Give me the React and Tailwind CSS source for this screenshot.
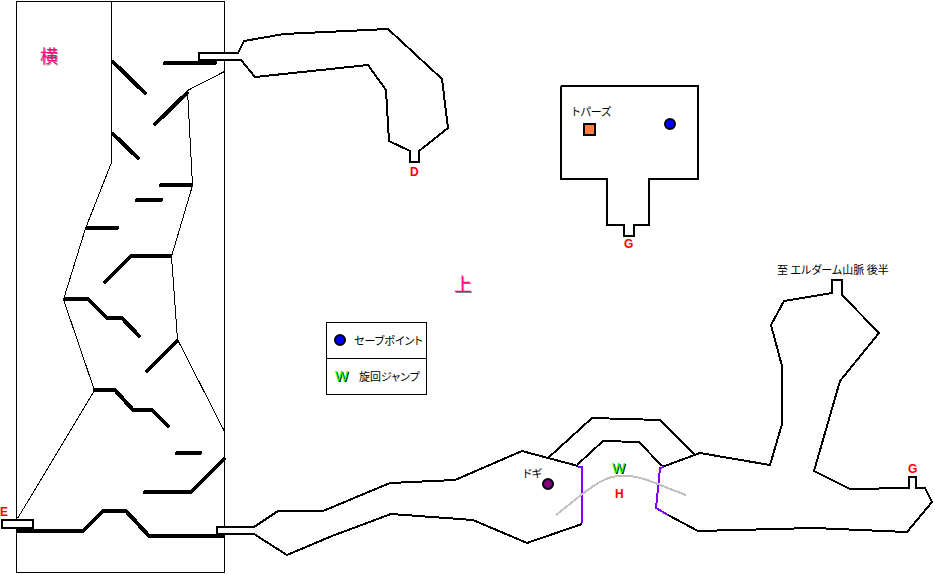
const jp = "font-['Noto_Sans_CJK_JP',sans-serif] [font-feature-settings:'palt']";

const ledges = [
  "165,63 215,63",
  "113,62 145,93",
  "187,93 155,124",
  "113,134 138,158",
  "161,185 191,185",
  "137,200 161,200",
  "88,228 117,228",
  "170,256 131,256 105,282",
  "65,299 88,299 107,318 122,318 139,336",
  "177,341 147,371",
  "95,390 115,390 133,410 152,410 168,426",
  "177,453 200,453",
  "145,492 191,492 224,459",
  "18,531 83,531 103,511 126,511 149,536 223,536",
];

const shaftWalls = [
  "111.5,1.5 111.5,162.5 85.5,228.5 63.5,299.5 94.5,390.5 17.5,518.5",
  "224.5,71.5 187.5,90.5 192.5,185.5 171.5,256.5 177.5,339.5 224.5,431.5",
];

const caveWalls = [
  "410,150 410,162 419,162 419,151 448,128 442,79 388,29 284,34 244,41 238,53 199,53 199,60 241,60 255,77 368,65 386,90 389,141 410,151",
  "561,86 698,86 698,179 649,179 649,225 634,225 634,236 624,236 624,225 607,225 607,179 561,179 561,86",
  "578,466 522,451 455,480 390,483 323,511 278,511 254,527 217,527 217,534 254,534 287,555 332,536 391,514 473,520 527,543 582,524",
  "548,458 592,418 660,420 696,456",
  "577,465 603,441 639,442 662,466",
  "662,467 700,453 770,465 782,424 782,366 771,325 784,301 832,293 832,280 842,280 842,295 879,333 840,381 814,471 850,489 909,488 909,477 916,477 916,488 925,488 932,502 907,532 814,528 698,531 668,515",
];

const exits = [
  { name: "D", x: 410, y: 176 },
  { name: "G", x: 624, y: 248 },
  { name: "G", x: 908, y: 473 },
  { name: "H", x: 615, y: 498 },
  { name: "E", x: 0, y: 516 },
];

const places = [
  { name: "トパーズ", x: 572, y: 116 },
  { name: "ドギ", x: 523, y: 478 },
  { name: "至 エルダーム山脈 後半", x: 777, y: 274 },
];

function ViewMark({ x, y, children }) {
  return (
    <g className={`${jp} text-[18px]`}>
      <text x={x + 1} y={y + 1} className="fill-[#808080] font-light" aria-hidden="true">{children}</text>
      <text x={x} y={y} className="fill-[#ff0080]">{children}</text>
    </g>
  );
}

function Legend() {
  return (
    <dl className={`${jp} m-0 grid h-full grid-rows-2 divide-y divide-black border border-black bg-white text-[11px] leading-4 text-black`}>
      <div className="flex items-center gap-2 pl-[7px]">
        <dt className="size-3 shrink-0 rounded-full border-2 border-black bg-[#0000ff]" />
        <dd className="whitespace-nowrap">セーブポイント</dd>
      </div>
      <div className="flex items-center gap-3 pl-2">
        <dt className="w-3 shrink-0 font-['Liberation_Sans',sans-serif] text-[14px] text-[#00ff00] [text-shadow:1px_1px_0_#000]">W</dt>
        <dd className="whitespace-nowrap">旋回ジャンプ</dd>
      </div>
    </dl>
  );
}

export default function App() {
  return (
    <main className="w-full bg-white">
      <svg viewBox="0 0 935 575" className="block h-auto w-full" role="img" aria-label="エルダーム山脈">
        <g fill="none" stroke="#000" shapeRendering="crispEdges">
          <g strokeWidth="1">
            <rect x="16.5" y="1.5" width="208" height="571" />
            {shaftWalls.map((p) => <polyline key={p} points={p} />)}
          </g>
          <g strokeWidth="4" strokeLinecap="round" strokeLinejoin="round">
            {ledges.map((p) => <polyline key={p} points={p} />)}
          </g>
          <g fill="#fff" strokeWidth="2">
            <rect x="2" y="520" width="31" height="8" />
            <rect x="199" y="53" width="39" height="7" stroke="none" />
            <rect x="217" y="527" width="37" height="7" stroke="none" />
          </g>
          <g strokeWidth="2">
            {caveWalls.map((p) => <polyline key={p} points={p} />)}
          </g>
          <g stroke="#8000ff" strokeWidth="2">
            <polyline points="578,467 582,467 582,523" />
            <polyline points="664,467 660,468 656,508 668,515" />
          </g>
          <path d="M556 515 L581 495 C598 482 608 476 621 476 C642 475 653 483 686 495" stroke="#c0c0c0" strokeWidth="2" />
          <rect x="584" y="124" width="11" height="11" fill="#ff8040" strokeWidth="2" />
        </g>
        <g stroke="#000" strokeWidth="2">
          <circle cx="670" cy="124" r="5" fill="#0000ff" />
          <circle cx="548" cy="484" r="5" fill="#800080" />
        </g>

        <ViewMark x={40} y={63}>横</ViewMark>
        <ViewMark x={454} y={291}>上</ViewMark>

        <g className={`${jp} fill-black text-[11px]`}>
          {places.map((p) => <text key={p.name} x={p.x} y={p.y}>{p.name}</text>)}
        </g>
        <g className="fill-[#ff0000] font-['Liberation_Sans',sans-serif] text-[12px] font-bold">
          {exits.map((e) => <text key={`${e.name}${e.x}`} x={e.x} y={e.y}>{e.name}</text>)}
        </g>
        <g className="font-['Liberation_Sans',sans-serif] text-[14px]">
          <text x="613" y="474" className="fill-black" aria-hidden="true">W</text>
          <text x="612" y="473" className="fill-[#00ff00]">W</text>
        </g>

        <foreignObject x="326" y="322" width="101" height="73">
          <Legend />
        </foreignObject>
      </svg>
    </main>
  );
}
